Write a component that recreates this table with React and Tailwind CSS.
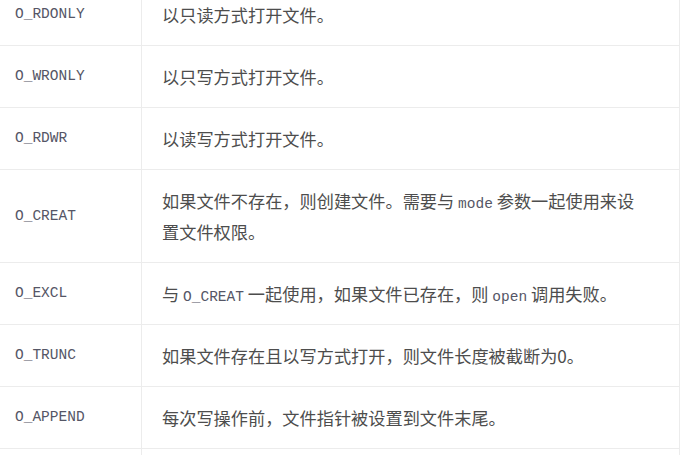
import React from "react";

const rows = [
  { flag: "O_RDONLY", desc: ["以只读方式打开文件。"] },
  { flag: "O_WRONLY", desc: ["以只写方式打开文件。"] },
  { flag: "O_RDWR", desc: ["以读写方式打开文件。"] },
  { flag: "O_CREAT", desc: ["如果文件不存在，则创建文件。需要与 ", { code: "mode" }, " 参数一起使用来设置文件权限。"] },
  { flag: "O_EXCL", desc: ["与 ", { code: "O_CREAT" }, " 一起使用，如果文件已存在，则 ", { code: "open" }, " 调用失败。"] },
  { flag: "O_TRUNC", desc: ["如果文件存在且以写方式打开，则文件长度被截断为0。"] },
  { flag: "O_APPEND", desc: ["每次写操作前，文件指针被设置到文件末尾。"] },
  { flag: "", desc: [""] },
];

const mono = { fontFamily: '"Liberation Mono", "Courier New", Cousine, monospace' };

export default function App() {
  return (
    <div className="w-[680px] h-[455px] overflow-hidden bg-white">
      {/* page was scrolled a bit, first row is cut */}
      <div
        className="-mt-[17px] w-[680px] border-t border-r border-[#ececec] text-[#4d4d4d] text-[17.2px] leading-[31px]"
        style={{ fontFamily: '"Noto Sans CJK SC", "Noto Sans", sans-serif' }}
      >
        {rows.map((r, i) => (
          <div key={i} className="grid grid-cols-[141px_1fr] border-b border-[#ececec]">
            <div className="flex items-center pl-[15px] py-[15px] text-[14.5px] text-[#555666]" style={mono}>
              {r.flag}
            </div>
            <div className="border-l border-[#ececec] pl-[20px] pr-[28px] py-[15px] h-full">
              <p className="leading-[31px]">
                {r.desc.map((d, j) =>
                  typeof d === "string" ? (
                    <span key={j}>{d}</span>
                  ) : (
                    <code key={j} className="text-[14.5px] leading-[0] text-[#555666]" style={mono}>
                      {d.code}
                    </code>
                  )
                )}
                {r.flag === "" && <span>&nbsp;</span>}
              </p>
            </div>
          </div>
        ))}
      </div>
    </div>
  );
}
